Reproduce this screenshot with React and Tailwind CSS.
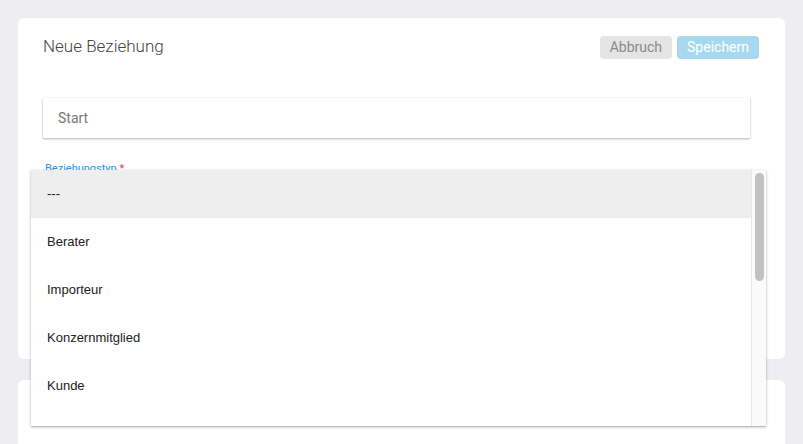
const options = ['---', 'Berater', 'Importeur', 'Konzernmitglied', 'Kunde'];

function OptionList() {
  return (
    <div className="absolute left-[31px] top-[170px] z-10 flex h-[256px] w-[735px] bg-white shadow-[0_1px_3px_rgba(0,0,0,0.25),0_1px_1px_rgba(0,0,0,0.12)]">
      <ul className="flex-1 overflow-hidden">
        {options.map((opt, i) => (
          <li
            key={opt}
            className={`flex h-[48px] items-center pl-[16px] text-[13px] text-[#222] ${i === 0 ? 'bg-[#eeeeee]' : 'bg-white'}`}
            style={{ fontFamily: '"Liberation Sans", Arial, sans-serif' }}
          >
            {opt}
          </li>
        ))}
      </ul>
      <div className="w-[15px] border-l border-[#e6e6e6] bg-[#fafafa] pt-[3px] pl-[3px]">
        <div className="h-[108px] w-[9px] rounded-full bg-[#c1c1c1]" />
      </div>
    </div>
  );
}

export default function App() {
  return (
    <div
      className="relative h-[444px] overflow-hidden bg-[#eeeef0] px-[18px] pt-[18px]"
      style={{ fontFamily: 'Roboto, "Noto Sans", sans-serif' }}
    >
      <div className="h-[341px] rounded-[6px] bg-white pl-[25px] pr-[26px] pt-[18px]">
        <div className="flex h-[23px] items-center justify-between">
          <h2 className="-mt-[2px] text-[17px] font-light text-[#444]">Neue Beziehung</h2>
          <div className="flex gap-[5px]">
            <button className="h-[23px] rounded-[4px] bg-[#e4e4e4] px-[10px] text-[14px] text-[#8a8a8a]">
              Abbruch
            </button>
            <button className="h-[23px] rounded-[4px] bg-[#a6d8ee] px-[10px] text-[14px] text-white">
              Speichern
            </button>
          </div>
        </div>

        <div className="mr-[9px] mt-[39px] flex h-[40px] items-center bg-white pl-[15px] pt-[1px] text-[14px] text-[#777] shadow-[0_1px_2px_rgba(0,0,0,0.3),0_0_1px_rgba(0,0,0,0.08)]">
          Start
        </div>

        <label className="mt-[24px] block pl-[2px] text-[11px] leading-[14px] text-[#2196f3]">
          Beziehungstyp <span className="text-[#e53935]">*</span>
        </label>
      </div>

      <div className="mt-[21px] h-[200px] rounded-[6px] bg-white" />

      <OptionList />
    </div>
  );
}
